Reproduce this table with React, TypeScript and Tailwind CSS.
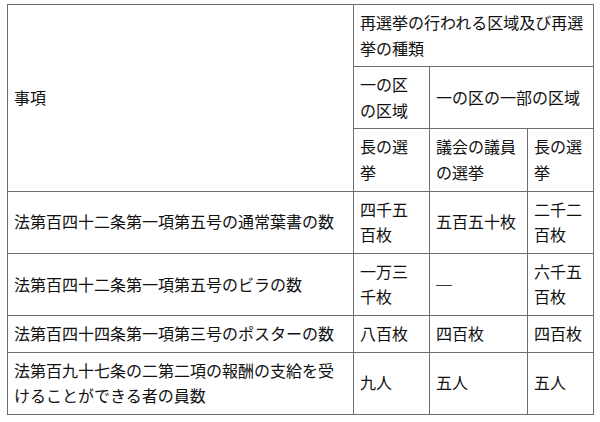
import React from "react";

const cell = "border border-[#6e6e6e] px-[6px] py-[5px] align-middle text-left font-normal";

export default function App() {
  return (
    <div
      className="bg-white w-[600px] h-[422px] pt-[4px] pl-[7px] text-[#111] text-[16px] leading-[25.6px]"
      style={{ fontFamily: '"Noto Sans CJK JP", "Noto Sans", sans-serif' }}
    >
      <table className="table-fixed border-collapse w-[586px]">
        <colgroup>
          <col className="w-[346px]" />
          <col className="w-[76px]" />
          <col className="w-[98px]" />
          <col className="w-[66px]" />
        </colgroup>
        <tbody>
          <tr>
            <td className={cell} rowSpan={3}>事項</td>
            <td className={cell} colSpan={3}>再選挙の行われる区域及び再選挙の種類</td>
          </tr>
          <tr>
            <td className={cell}>一の区の区域</td>
            <td className={cell} colSpan={2}>一の区の一部の区域</td>
          </tr>
          <tr>
            <td className={cell}>長の選挙</td>
            <td className={cell}>議会の議員の選挙</td>
            <td className={cell}>長の選挙</td>
          </tr>
          <tr>
            <td className={cell}>法第百四十二条第一項第五号の通常葉書の数</td>
            <td className={cell}>四千五百枚</td>
            <td className={cell}>五百五十枚</td>
            <td className={cell}>二千二百枚</td>
          </tr>
          <tr>
            <td className={cell}>法第百四十二条第一項第五号のビラの数</td>
            <td className={cell}>一万三千枚</td>
            <td className={cell}>
              <span className="font-bold text-black">─</span>
            </td>
            <td className={cell}>六千五百枚</td>
          </tr>
          <tr>
            <td className={cell}>法第百四十四条第一項第三号のポスターの数</td>
            <td className={cell}>八百枚</td>
            <td className={cell}>四百枚</td>
            <td className={cell}>四百枚</td>
          </tr>
          <tr>
            <td className={cell}>法第百九十七条の二第二項の報酬の支給を受けることができる者の員数</td>
            <td className={cell}>九人</td>
            <td className={cell}>五人</td>
            <td className={cell}>五人</td>
          </tr>
        </tbody>
      </table>
    </div>
  );
}
